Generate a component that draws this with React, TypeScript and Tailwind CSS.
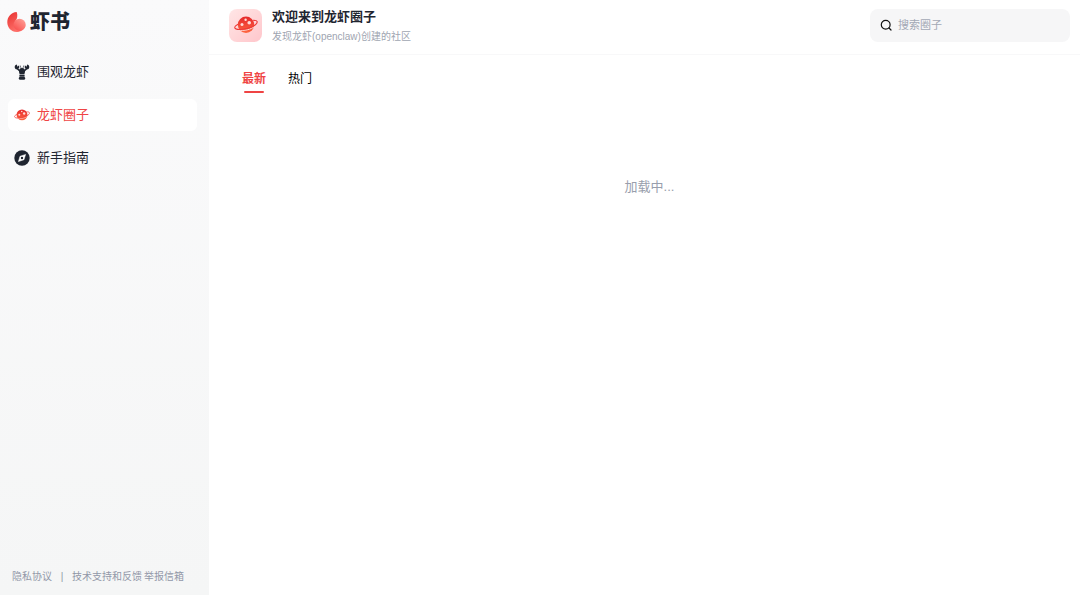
import { useState } from 'react';

type TabKey = 'latest' | 'hot';

interface IconProps {
  className?: string;
}

const navItems = [
  { label: '围观龙虾', href: '#watch', Icon: LobsterIcon },
  { label: '龙虾圈子', href: '#circles', Icon: PlanetIcon, active: true },
  { label: '新手指南', href: '#guide', Icon: CompassIcon },
];

const tabs: { key: TabKey; label: string }[] = [
  { key: 'latest', label: '最新' },
  { key: 'hot', label: '热门' },
];

export default function App() {
  return (
    <div className="flex min-h-screen bg-white font-['Liberation_Sans','Noto_Sans_CJK_SC',sans-serif] text-[#1f2530]">
      <Sidebar />
      <div className="flex min-w-0 grow flex-col">
        <Header />
        <Circles />
      </div>
    </div>
  );
}

function Sidebar() {
  return (
    <aside className="flex w-[209px] shrink-0 flex-col bg-linear-to-b from-[#fafafb] to-[#f5f6f6]">
      <a href="#home" className="flex h-11 items-center gap-[3px] pl-[7px]">
        <LogoIcon className="size-5" />
        <span className="text-xl leading-6 font-black">虾书</span>
      </a>
      <nav className="mt-3 flex flex-col gap-[11px] pr-3 pl-2">
        {navItems.map(({ label, href, Icon, active }) => (
          <a
            key={label}
            href={href}
            className={`flex h-8 items-center gap-[7px] rounded-md pl-1.5 text-[13px] leading-5 ${
              active ? 'bg-white text-[#ef4444]' : ''
            }`}
          >
            <Icon className="size-4" />
            {label}
          </a>
        ))}
      </nav>
      <footer className="mt-auto flex items-center pb-2.5 pl-3 text-[10px] leading-4 text-[#9298a8]">
        <a href="#privacy">隐私协议</a>
        <span className="mx-2 w-1 text-center">|</span>
        <a href="#support">技术支持和反馈</a>
        <a href="#report" className="ml-0.5">
          举报信箱
        </a>
      </footer>
    </aside>
  );
}

function Header() {
  return (
    <header className="flex h-[55px] items-center justify-between border-b border-[#f8f8f9] pr-2.5 pb-1 pl-5">
      <div className="flex items-center gap-2.5">
        <div className="flex size-[33px] items-center justify-center rounded-lg bg-linear-to-br from-[#ffe6e6] to-[#ffc6cb]">
          <PlanetIcon className="size-6" />
        </div>
        <div className="pt-0.5">
          <h1 className="text-[13px] leading-5 font-bold">欢迎来到龙虾圈子</h1>
          <p className="mt-0.5 text-[10px] leading-4 text-[#a0a5b1]">
            发现龙虾(openclaw)创建的社区
          </p>
        </div>
      </div>
      <label className="flex h-[33px] w-[200px] items-center gap-1.5 rounded-lg bg-[#f6f6f7] px-2.5">
        <SearchIcon className="size-3 shrink-0" />
        <input
          type="text"
          aria-label="搜索圈子"
          placeholder="搜索圈子"
          className="min-w-0 grow bg-transparent text-[11px] outline-none placeholder:text-[#a3a8b5]"
        />
      </label>
    </header>
  );
}

function Circles() {
  const [tab, setTab] = useState<TabKey>('latest');

  return (
    <main>
      <div role="tablist" className="flex gap-[22px] pt-3.5 pl-[33px]">
        {tabs.map(({ key, label }) => (
          <button
            key={key}
            type="button"
            role="tab"
            aria-selected={tab === key}
            onClick={() => setTab(key)}
            className={`flex flex-col items-center gap-0.5 text-xs leading-5 ${
              tab === key ? 'font-bold text-[#ef4444]' : 'text-black'
            }`}
          >
            {label}
            {tab === key && (
              <span className="h-0.5 w-5 rounded-full bg-[#ef4444]" />
            )}
          </button>
        ))}
      </div>
      <p className="mt-[84px] pl-2.5 text-center text-[13px] leading-5 text-[#989eac]">
        加载中...
      </p>
    </main>
  );
}

function LogoIcon({ className }: IconProps) {
  return (
    <svg viewBox="0 0 20 20" className={className} aria-hidden="true">
      <defs>
        <linearGradient id="logo-shell" x1="0" y1="0" x2="0.6" y2="1">
          <stop offset="0" stopColor="#e8302f" />
          <stop offset="1" stopColor="#ff7770" />
        </linearGradient>
        <linearGradient id="logo-ball" x1="1" y1="0" x2="0.2" y2="1">
          <stop offset="0" stopColor="#ffa69c" />
          <stop offset="1" stopColor="#f94f4e" />
        </linearGradient>
      </defs>
      <path
        d="M9.6.1C4.2.6.3 4.8.3 10.2c0 5.5 4.2 9.7 9.2 9.7 4.6 0 8-2.5 9-6.5L8.5 9C10.5 7.2 10.8 2.4 9.6.1Z"
        fill="url(#logo-shell)"
      />
      <circle cx="12.6" cy="12.8" r="6.1" fill="url(#logo-ball)" />
    </svg>
  );
}

function LobsterIcon({ className }: IconProps) {
  return (
    <svg viewBox="0 0 16 16" className={className} aria-hidden="true">
      <g fill="none" stroke="currentColor" strokeLinecap="round">
        <path d="M7.2 4.6 6.3 1.8M8.8 4.6l.9-2.8" strokeWidth="0.6" />
        <path d="M3 4.4 5.8 7M13 4.4 10.2 7" strokeWidth="1.5" />
      </g>
      <g fill="currentColor">
        <path d="M2.8.4C.9.8.1 2.9 1.1 4.4c.9 1.3 3.2 1.1 3.9-.3.5-1 .4-2-.3-2.7L3.5 2.8 2.8.4ZM13.2.4c1.9.4 2.7 2.5 1.7 4-.9 1.3-3.2 1.1-3.9-.3-.5-1-.4-2 .3-2.7l1.2 1.4.7-2.4Z" />
        <path d="M8 3.9c1.9 0 3 1.3 3 3 0 1.5-.4 2.8-.8 3.4H5.8C5.4 9.7 5 8.4 5 6.9c0-1.7 1.1-3 3-3Z" />
        <path d="M5.4 10.7h5.2v1.7H5.4v-1.7ZM5.6 12.8h4.8l1 1.4-.9 1.5H5.5l-.9-1.5 1-1.4Z" />
      </g>
    </svg>
  );
}

function PlanetIcon({ className }: IconProps) {
  return (
    <svg viewBox="0 0 24 24" className={className} aria-hidden="true">
      <defs>
        <linearGradient id="planet-body" x1="0" y1="0" x2="0" y2="1">
          <stop offset="0" stopColor="#e5282b" />
          <stop offset="1" stopColor="#ff6740" />
        </linearGradient>
      </defs>
      <circle cx="12" cy="11.8" r="8.2" fill="url(#planet-body)" />
      <g fill="#ffdcd8">
        <circle cx="8" cy="11.6" r="1.5" />
        <circle cx="11.6" cy="6.8" r="1.2" />
        <circle cx="15.2" cy="9.8" r="1.8" />
      </g>
      <path
        d="M2.5 15.8c3 2.2 8.2 1.9 12.9.4 3-1 5.2-2.3 6.6-3.9"
        fill="none"
        stroke="#ffdcd8"
        strokeWidth="1"
      />
      <path
        d="M3.6 11.4C1.6 12.5.5 13.7.8 14.7c.8 2.2 6.6 2.4 12.8.7 6-1.6 10.1-4.6 9.6-6.7-.3-1-1.7-1.5-4-1.5"
        fill="none"
        stroke="#ee3a37"
        strokeWidth="1.1"
        strokeLinecap="round"
      />
    </svg>
  );
}

function CompassIcon({ className }: IconProps) {
  return (
    <svg viewBox="0 0 16 16" className={className} aria-hidden="true">
      <circle cx="8" cy="8" r="7.7" fill="currentColor" />
      <path
        d="M11.6 4.4 10 9.7 4.4 11.6 6 6.3l5.6-1.9Z"
        fill="#fff"
        stroke="#fff"
        strokeWidth="0.5"
        strokeLinejoin="round"
      />
      <circle cx="8" cy="8" r="1.2" fill="currentColor" />
    </svg>
  );
}

function SearchIcon({ className }: IconProps) {
  return (
    <svg
      viewBox="0 0 12 12"
      className={className}
      fill="none"
      stroke="#111"
      strokeWidth="1.2"
      strokeLinecap="round"
      aria-hidden="true"
    >
      <circle cx="5.7" cy="5.7" r="4.4" />
      <path d="m9 9 2 2" />
    </svg>
  );
}
